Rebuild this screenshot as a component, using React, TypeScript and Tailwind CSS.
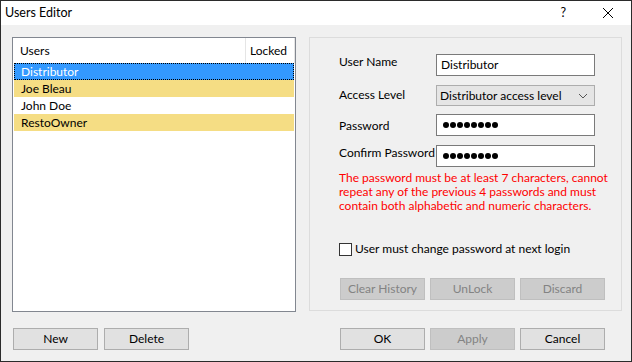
import { useState } from "react";

type UserRow = {
  name: string;
  locked: boolean;
  tone: "selected" | "yellow" | "white";
};

const users: UserRow[] = [
  { name: "Distributor", locked: false, tone: "selected" },
  { name: "Joe Bleau", locked: false, tone: "yellow" },
  { name: "John Doe", locked: false, tone: "white" },
  { name: "RestoOwner", locked: false, tone: "yellow" },
];

function WinButton({ label, disabled }: { label: string; disabled?: boolean }) {
  return (
    <button
      className={
        disabled
          ? "w-[85px] h-[22px] border border-[#bfbfbf] bg-[#cccccc] text-[#838383] leading-none"
          : "w-[85px] h-[22px] border border-[#adadad] bg-[#e1e1e1] text-black leading-none"
      }
    >
      {label}
    </button>
  );
}

function PasswordDots() {
  return (
    <div className="flex gap-[1px] items-center h-full pl-[6px]">
      {Array.from({ length: 8 }).map((_, i) => (
        <span key={i} className="w-[6px] h-[6px] rounded-full bg-black" />
      ))}
    </div>
  );
}

export default function App() {
  const [mustChange, setMustChange] = useState(false);

  return (
    <div
      className="w-[632px] h-[362px] border border-[#2b2b2b] bg-[#f0f0f0] flex flex-col text-[12px] text-black whitespace-nowrap"
      style={{ fontFamily: 'Lato, "Liberation Sans", sans-serif' }}
    >
      {/* title bar */}
      <div className="h-[24px] bg-white flex items-center shrink-0">
        <span className="pl-[4px] text-[12.5px]">Users Editor</span>
        <span className="ml-auto mr-[36px] text-[12.5px]">?</span>
        <svg width="12" height="12" viewBox="0 0 12 12" className="mr-[17px]">
          <path d="M1 1 L11 11 M11 1 L1 11" stroke="#000" strokeWidth="1" />
        </svg>
      </div>

      <div className="flex pt-[12px]">
        {/* left column */}
        <div className="flex flex-col ml-[11px] w-[284px]">
          <div className="h-[275px] border border-[#828790] bg-white flex flex-col">
            <div className="flex h-[25px] items-center shrink-0">
              <div className="w-[232px] pl-[7px]">Users</div>
              <div className="h-full w-px bg-[#e5e5e5]" />
              <div className="w-[48px] pl-[4px]">Locked</div>
              <div className="h-full w-px bg-[#e5e5e5]" />
            </div>
            <div className="flex flex-col px-px">
              {users.map((u) => (
                <div
                  key={u.name}
                  className={
                    u.tone === "selected"
                      ? "h-[17px] flex items-center pl-[6px] bg-[#3399ff] text-white border border-dotted border-black"
                      : u.tone === "yellow"
                      ? "h-[17px] flex items-center pl-[7px] bg-[#f5dd84]"
                      : "h-[17px] flex items-center pl-[7px] bg-white"
                  }
                >
                  {u.name}
                </div>
              ))}
            </div>
          </div>
          <div className="flex gap-[6px] mt-[16px] ml-px">
            <WinButton label="New" />
            <WinButton label="Delete" />
          </div>
        </div>

        {/* right column */}
        <div className="flex flex-col ml-[13px] w-[313px]">
          <div className="h-[274px] border border-[#dcdcdc] flex flex-col pl-[29px]">
            <div className="flex mt-[16px] h-[22px]">
              <div className="w-[97px] leading-[16px]">User Name</div>
              <div className="w-[159px] border border-[#7a7a7a] bg-white flex items-center pl-[4px]">
                Distributor
              </div>
            </div>
            <div className="flex mt-[9px] h-[21px]">
              <div className="w-[97px] leading-[16px] pt-[2px]">Access Level</div>
              <div className="w-[159px] border border-[#adadad] bg-[#e5e5e5] flex items-center pl-[3px] pr-[6px]">
                <span>Distributor access level</span>
                <svg width="10" height="6" viewBox="0 0 10 6" className="ml-auto">
                  <path d="M1 1 L5 5 L9 1" fill="none" stroke="#555" strokeWidth="1" />
                </svg>
              </div>
            </div>
            <div className="flex mt-[8px] h-[22px]">
              <div className="w-[97px] leading-[16px] pt-[4px]">Password</div>
              <div className="w-[159px] border border-[#7a7a7a] bg-white">
                <PasswordDots />
              </div>
            </div>
            <div className="flex mt-[9px] h-[22px]">
              <div className="w-[97px] leading-[16px]">Confirm Password</div>
              <div className="w-[159px] border border-[#7a7a7a] bg-white">
                <PasswordDots />
              </div>
            </div>
            <p className="mt-[4px] text-[#ff0000] leading-[14px]">
              The password must be at least 7 characters, cannot
              <br />
              repeat any of the previous 4 passwords and must
              <br />
              contain both alphabetic and numeric characters.
            </p>
            <label className="flex items-center mt-[29px] h-[14px]">
              <span
                onClick={() => setMustChange(!mustChange)}
                className="w-[13px] h-[13px] border border-[#333333] bg-white"
              />
              <span className="ml-[3px]">User must change password at next login</span>
            </label>
            <div className="flex gap-[5px] mt-[22px] ml-px">
              <WinButton label="Clear History" disabled />
              <WinButton label="UnLock" disabled />
              <WinButton label="Discard" disabled />
            </div>
          </div>
          <div className="flex gap-[5px] mt-[17px] ml-[31px]">
            <WinButton label="OK" />
            <WinButton label="Apply" disabled />
            <WinButton label="Cancel" />
          </div>
        </div>
      </div>
    </div>
  );
}
